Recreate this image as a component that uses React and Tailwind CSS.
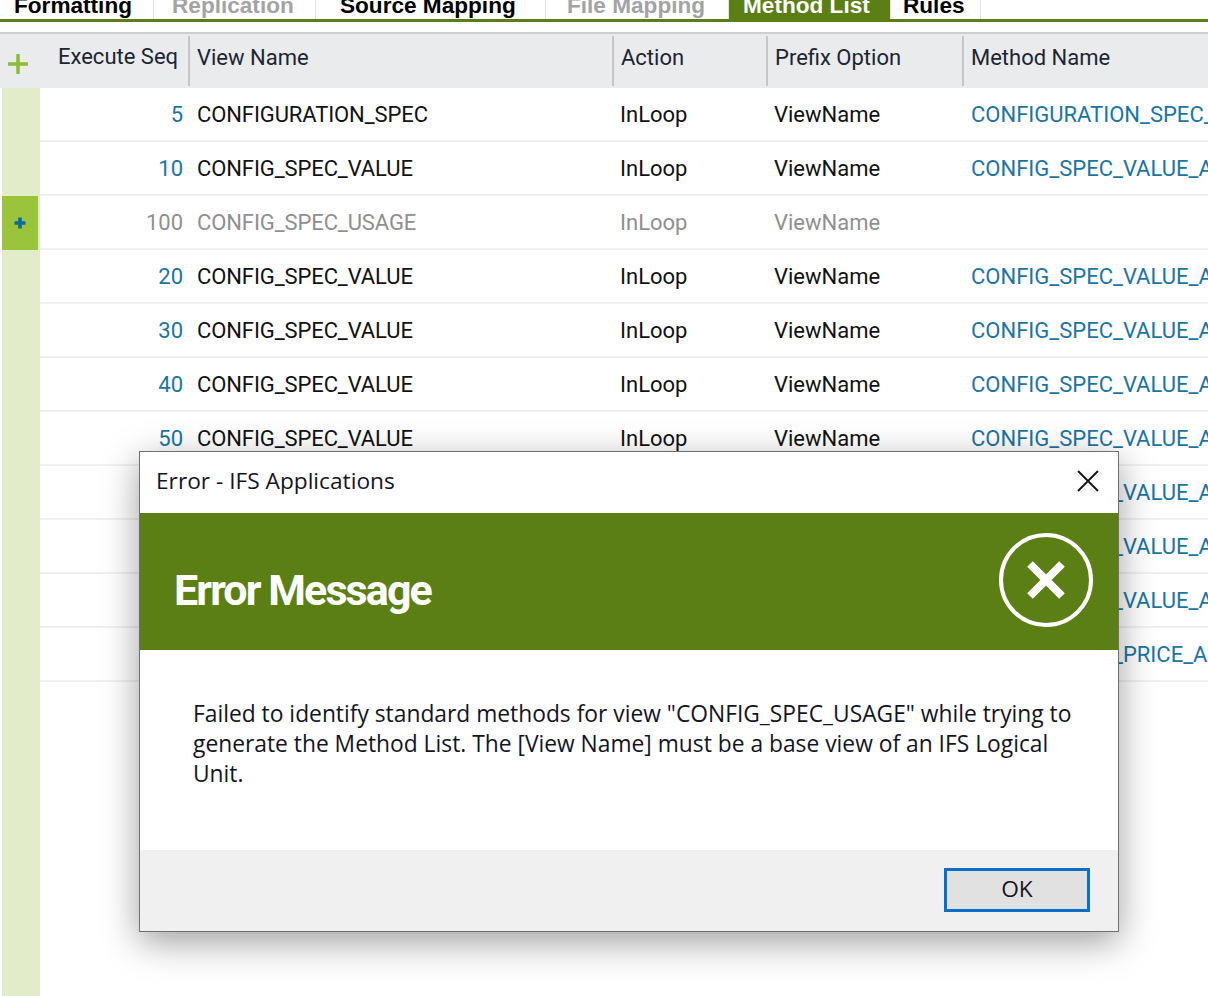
import React from 'react';

const tabs = [
  { label: 'Formatting', width: 'w-[154px]', style: 'text-black pl-[14px]' },
  { label: 'Replication', width: 'w-[162px]', style: 'text-[#a3a3a3] pl-[18px]' },
  { label: 'Source Mapping', width: 'w-[230px]', style: 'text-black pl-[24px]' },
  { label: 'File Mapping', width: 'w-[183px]', style: 'text-[#a3a3a3] pl-[21px]' },
  { label: 'Method List', width: 'w-[162px]', style: 'text-white bg-[#5b7f14] pl-[14px]' },
  { label: 'Rules', width: 'w-[90px]', style: 'text-black pl-[12px]' },
];

const rows = [
  { seq: 5, view: 'CONFIGURATION_SPEC', method: 'CONFIGURATION_SPEC_API' },
  { seq: 10, view: 'CONFIG_SPEC_VALUE', method: 'CONFIG_SPEC_VALUE_API' },
  { seq: 100, view: 'CONFIG_SPEC_USAGE', method: '', disabled: true },
  { seq: 20, view: 'CONFIG_SPEC_VALUE', method: 'CONFIG_SPEC_VALUE_API' },
  { seq: 30, view: 'CONFIG_SPEC_VALUE', method: 'CONFIG_SPEC_VALUE_API' },
  { seq: 40, view: 'CONFIG_SPEC_VALUE', method: 'CONFIG_SPEC_VALUE_API' },
  { seq: 50, view: 'CONFIG_SPEC_VALUE', method: 'CONFIG_SPEC_VALUE_API' },
  { seq: 60, view: 'CONFIG_SPEC_VALUE', method: 'CONFIG_SPEC_VALUE_API' },
  { seq: 70, view: 'CONFIG_SPEC_VALUE', method: 'CONFIG_SPEC_VALUE_API' },
  { seq: 80, view: 'CONFIG_SPEC_VALUE', method: 'CONFIG_SPEC_VALUE_API' },
  { seq: 90, view: 'CONFIG_SPEC_PRICE', method: 'CONFIG_SPEC_PRICE_API' },
];

const headers = [
  { label: 'View Name', width: 'w-[424px]' },
  { label: 'Action', width: 'w-[154px]' },
  { label: 'Prefix Option', width: 'w-[196px]' },
  { label: 'Method Name', width: 'flex-1' },
];

const Row = ({ row }) => {
  const textColor = row.disabled ? 'text-[#8f8f8f]' : 'text-[#111]';
  return (
    <div className="flex h-[54px] border-b-2 border-[#f1f1f1] items-center pt-[2px]">
      <div className={`w-[149px] shrink-0 pr-[6px] text-right ${row.disabled ? 'text-[#8f8f8f]' : 'text-[#1a74a4]'}`}>{row.seq}</div>
      <div className={`w-[424px] shrink-0 pl-[8px] tracking-[-0.1px] ${textColor}`}>{row.view}</div>
      <div className={`w-[154px] shrink-0 pl-[7px] ${textColor}`}>InLoop</div>
      <div className={`w-[196px] shrink-0 pl-[7px] ${textColor}`}>ViewName</div>
      <div className="shrink-0 pl-[8px] text-[#1a74a4] whitespace-nowrap">{row.method}</div>
    </div>
  );
};

export default function App() {
  return (
    <div className="relative h-[996px] w-[1208px] overflow-hidden bg-white font-['Roboto',sans-serif]">
      {/* tab strip, cut off by the top of the picture */}
      <div className="flex h-[19px] items-end overflow-hidden font-['Liberation_Sans',sans-serif]">
        {tabs.map((tab) => (
          <div key={tab.label} className={`h-[19px] shrink-0 border-r border-[#e4e4e4] font-bold text-[22.6px] leading-[12px] whitespace-nowrap ${tab.width} ${tab.style}`}>
            {tab.label}
          </div>
        ))}
      </div>
      <div className="h-[3px] bg-[#5b7f14]" />

      {/* method list grid */}
      <div className="mt-[10px] border-t-2 border-[#cfcfcf]">
        <div className="flex h-[54px] bg-[#e9ebed] text-[22px] text-[#1c2530]">
          <div className="flex w-[40px] shrink-0 items-center justify-center pr-[4px] pt-[6px]">
            <svg width="22" height="22" viewBox="0 0 22 22" className="text-[#8dba37]">
              <path d="M11 1v20M1 11h20" stroke="currentColor" strokeWidth="3.5" fill="none" />
            </svg>
          </div>
          <div className="w-[148px] shrink-0 pt-[8px] pl-[18px] leading-[30px] whitespace-nowrap">Execute Seq</div>
          {headers.map((h) => (
            <div key={h.label} className={`${h.width} shrink-0 my-[2px] border-l-2 border-[#c4c6c8] pl-[7px] pt-[7px] leading-[30px] whitespace-nowrap`}>{h.label}</div>
          ))}
        </div>
        <div className="flex">
          <div className="ml-[2px] h-[910px] w-[38px] shrink-0 bg-[#e2ecc9]">
            <div className="h-[108px]" />
            <div className="flex h-[54px] w-[36px] items-center justify-center bg-[#9bc43d]">
              <svg width="12" height="12" viewBox="0 0 12 12" className="text-[#0f6a9c]">
                <path d="M6 0.5v11M0.5 6h11" stroke="currentColor" strokeWidth="3.6" fill="none" />
              </svg>
            </div>
          </div>
          <div className="min-w-0 flex-1 text-[22px] leading-[28px]">
            {rows.map((row) => <Row key={row.seq} row={row} />)}
          </div>
        </div>
      </div>

      {/* error dialog */}
      <div className="absolute left-[139px] top-[451px] flex h-[481px] w-[980px] flex-col border border-[#6f6f6f] bg-white shadow-[0_10px_34px_rgba(0,0,0,0.38)] font-['Open_Sans',sans-serif]">
        <div className="flex h-[61px] shrink-0 items-center justify-between pb-[3px] pl-[16px] pr-[19px] text-[22.7px] text-[#14141e]">
          <span>Error - IFS Applications</span>
          <svg width="22" height="22" viewBox="0 0 22 22" className="text-[#111]">
            <path d="M1 1l20 20M21 1L1 21" stroke="currentColor" strokeWidth="1.8" fill="none" />
          </svg>
        </div>
        <div className="flex h-[137px] shrink-0 items-center justify-between bg-[#5b7f14] pl-[34px] pr-[24px]">
          <span className="mt-[18px] font-['Roboto',sans-serif] text-[43px] font-bold tracking-[-1.9px] text-white">Error Message</span>
          <svg width="96" height="96" viewBox="0 0 96 96" className="mt-[-4px] text-white">
            <circle cx="48" cy="48" r="45" stroke="currentColor" strokeWidth="4" fill="none" />
            <path d="M32 32l32 32M64 32L32 64" stroke="currentColor" strokeWidth="8" fill="none" />
          </svg>
        </div>
        <div className="flex-1 pl-[53px] pr-[30px] pt-[49px] text-[22.8px] leading-[30px] text-[#14141e]">
          Failed to identify standard methods for view "CONFIG_SPEC_USAGE" while trying to generate the Method List. The [View Name] must be a base view of an IFS Logical Unit.
        </div>
        <div className="flex h-[81px] shrink-0 items-start justify-end bg-[#f0f0f0] pr-[28px] pt-[18px]">
          <button className="h-[44px] w-[146px] border-[3px] border-[#0a6fc9] bg-[#e1e1e1] pb-[2px] text-[22.7px] text-[#14141e]">OK</button>
        </div>
      </div>
    </div>
  );
}
